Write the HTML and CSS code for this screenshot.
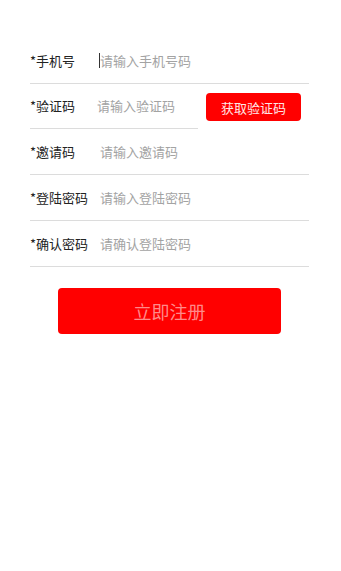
FILE: index.html
```html
<!DOCTYPE html>
<html lang="zh-CN">
<head>
<meta charset="utf-8">
<title>注册</title>
<link rel="stylesheet" href="styles.css">
</head>
<body>
<div class="form">
  <div class="row">
    <label class="label">*手机号</label>
    <span class="caret"></span>
    <input class="input" type="text" placeholder="请输入手机号码">
  </div>
  <div class="row row-code">
    <div class="field">
      <label class="label label-short">*验证码</label>
      <input class="input" type="text" placeholder="请输入验证码">
    </div>
    <button class="code-btn" type="button">获取验证码</button>
  </div>
  <div class="row">
    <label class="label">*邀请码</label>
    <input class="input" type="text" placeholder="请输入邀请码">
  </div>
  <div class="row">
    <label class="label">*登陆密码</label>
    <input class="input" type="password" placeholder="请输入登陆密码">
  </div>
  <div class="row">
    <label class="label">*确认密码</label>
    <input class="input" type="password" placeholder="请确认登陆密码">
  </div>
  <button class="submit" type="button">立即注册</button>
</div>
</body>
</html>
```

FILE: styles.css
```css
html, body {
  margin: 0;
  padding: 0;
  background: #fff;
}
body {
  font-family: "Noto Sans CJK SC", "Noto Sans", sans-serif;
  color: #333;
}
.form {
  padding: 38px 32px 0 30px;
  display: flex;
  flex-direction: column;
}
.row {
  display: flex;
  align-items: center;
  height: 45px;
  border-bottom: 1px solid #dcdcdc;
}
.label {
  width: 70px;
  flex: none;
  font-size: 13px;
  line-height: 18px;
  color: #222;
}
.label-short {
  width: 67px;
}
.caret {
  width: 1px;
  height: 15px;
  background: #333;
  margin-left: -1px;
  flex: none;
}
.input {
  flex: 1;
  min-width: 0;
  border: none;
  outline: none;
  padding: 0;
  margin: 0;
  background: transparent;
  font-family: inherit;
  font-size: 13px;
  line-height: 18px;
  color: #333;
}
.input::placeholder {
  color: #a3a3a3;
}
.row-code {
  border-bottom: none;
  align-items: stretch;
}
.field {
  width: 168px;
  display: flex;
  align-items: center;
  border-bottom: 1px solid #dcdcdc;
}
.code-btn {
  align-self: center;
  margin-left: 8px;
  margin-top: 1px;
  width: 95px;
  height: 28px;
  border: none;
  border-radius: 4px;
  background: #ff0000;
  color: #ffe6e6;
  font-family: inherit;
  font-size: 13px;
  padding: 0;
}
.submit {
  align-self: center;
  margin: 21px 0 0 0;
  width: 223px;
  height: 46px;
  border: none;
  border-radius: 4px;
  background: #ff0000;
  color: #ff8a8a;
  font-family: inherit;
  font-size: 18px;
  padding: 0;
}
```
